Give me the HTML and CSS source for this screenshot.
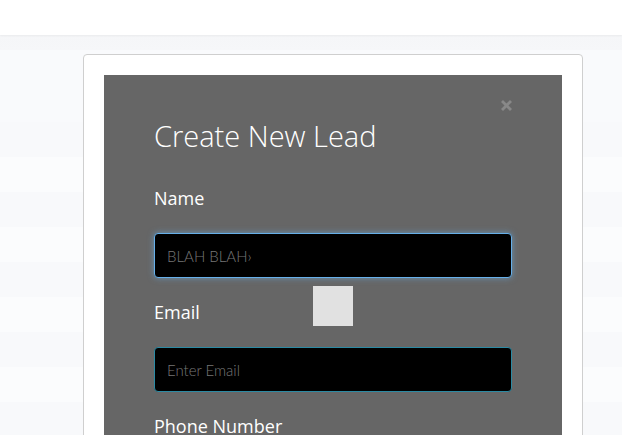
FILE: index.html
```html
<!DOCTYPE html>
<html>
<head>
<meta charset="utf-8">
<link rel="stylesheet" href="styles.css">
</head>
<body>
<header class="topbar"></header>
<main class="page">
  <section class="card">
    <div class="modal">
      <button class="close" aria-label="Close">
        <svg width="11" height="11" viewBox="0 0 11 11"><path d="M2 2 L9 9 M9 2 L2 9" stroke="#888" stroke-width="2.8" stroke-linecap="square"/></svg>
      </button>
      <h1 class="title">Create New Lead</h1>
      <form class="form">
        <label class="label">Name</label>
        <input class="field focus" type="text" placeholder="BLAH BLAH›">
        <label class="label">Email</label>
        <input class="field" type="text" placeholder="Enter Email">
        <label class="label">Phone Number</label>
      </form>
      <div class="swatch"></div>
    </div>
  </section>
</main>
</body>
</html>
```
FILE: styles.css
```css
* { box-sizing: border-box; }
html, body { margin: 0; padding: 0; }
body {
  width: 622px;
  height: 435px;
  overflow: hidden;
  font-family: "Open Sans", "Lato", sans-serif;
  background-color: #fafbfd;
  background-image: repeating-linear-gradient(to bottom,
    #f8f9fb 0px, #f8f9fb 35px, #fbfcfd 35px, #fbfcfd 70px);
  background-position: 0 122px;
  background-repeat: repeat;
}
.topbar {
  height: 35px;
  background: #fff;
  box-shadow: 0 1px 2px rgba(0,0,0,0.05);
  position: relative;
  z-index: 1;
}
.page {
  padding: 19px 0 0 83px;
  background: linear-gradient(to bottom, #f5f6f8 0, #f6f7f9 15px, #f9fafc 15px, #f9fafc 87px, transparent 87px);
  height: 400px;
}
.card {
  width: 500px;
  height: 420px;
  background: #fff;
  border: 1px solid #cfcfcf;
  border-radius: 4px;
  padding: 20px 20px 0 20px;
}
.modal {
  position: relative;
  background: #666666;
  height: 400px;
  padding: 38px 50px 0 50px;
}
.close {
  position: absolute;
  top: 25px;
  right: 50px;
  width: 11px;
  height: 11px;
  padding: 0;
  border: 0;
  background: none;
  display: flex;
}
.title {
  margin: 0;
  font-family: "Open Sans", sans-serif;
  font-weight: 300;
  font-size: 29px;
  line-height: 46px;
  color: #fff;
}
.form {
  display: flex;
  flex-direction: column;
  margin-top: 27px;
}
.label {
  font-family: "Open Sans", sans-serif;
  font-size: 18px;
  line-height: 24px;
  color: #fff;
  margin-bottom: 23px;
}
.field {
  width: 358px;
  height: 45px;
  background: #000;
  border: 1px solid #2b8aa3;
  border-radius: 4px;
  padding: 0 12px;
  font-family: "Lato", sans-serif;
  font-weight: 300;
  font-size: 15px;
  color: #ccc;
  margin-bottom: 22px;
  outline: none;
}
.field::placeholder { color: #777; }
.field.focus {
  border-color: #66afe9;
  box-shadow: 0 0 6px rgba(102,175,233,0.6);
}
.swatch {
  position: absolute;
  left: 209px;
  top: 211px;
  width: 40px;
  height: 40px;
  background: #e1e1e1;
}
```
